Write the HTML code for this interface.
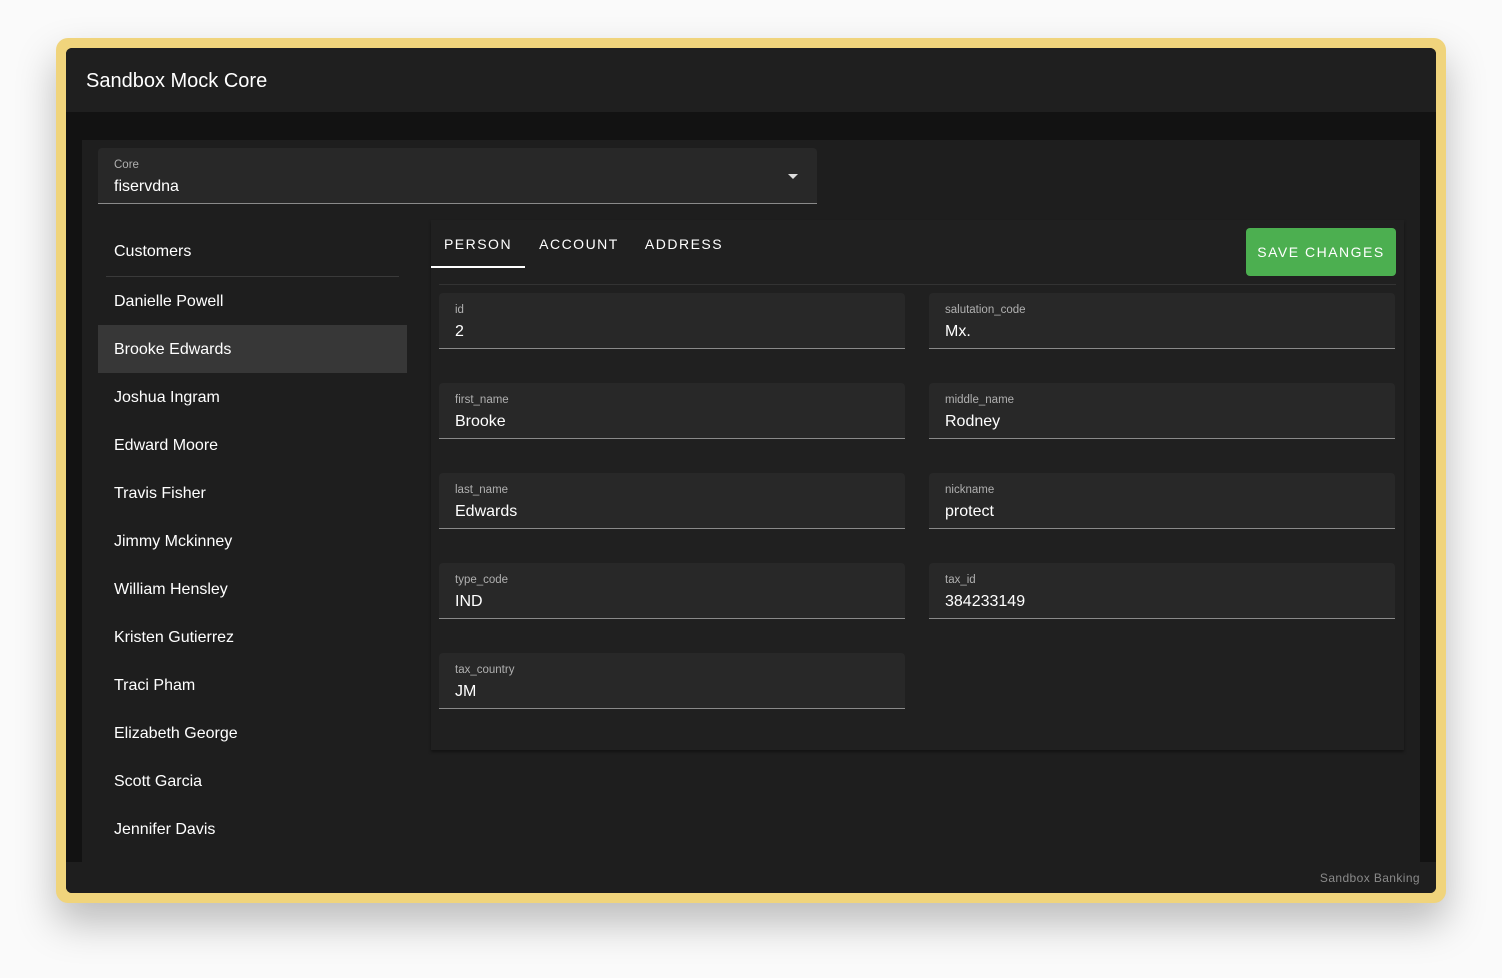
<!DOCTYPE html>
<html><head><style>
*{box-sizing:border-box;margin:0;padding:0}
body{width:1502px;height:978px;background:#fafafa;font-family:"Liberation Sans",sans-serif;position:relative;overflow:hidden}
.frame{position:absolute;left:56px;top:38px;width:1390px;height:865px;background:#f0d47c;border-radius:12px;box-shadow:0 20px 40px rgba(0,0,0,.25)}
.win{position:absolute;left:66px;top:48px;width:1370px;height:845px;background:#121212;border-radius:6px;overflow:hidden}
.hdr{position:absolute;left:0;top:0;width:100%;height:64px;background:#1f1f1f;color:#fff;font-size:20px;padding:22px 20px}
.main{position:absolute;left:16px;top:92px;width:1338px;height:722px;background:#1e1e1e}
.foot{position:absolute;left:0;top:814px;width:100%;height:31px;background:#1e1e1e;color:#8a8a8a;font-size:12px;text-align:right;padding:9px 16px;letter-spacing:.4px}
.sel{position:absolute;left:16px;top:8px;width:719px;height:56px;background:#282828;border-bottom:1px solid #8a8a8a;border-radius:4px 4px 0 0}
.lbl{position:absolute;left:16px;top:11px;font-size:11.5px;color:#b0b0b0}
.val{position:absolute;left:16px;top:30px;font-size:16px;color:#fff}
.arrow{position:absolute;right:19px;top:26px;width:0;height:0;border-left:5px solid transparent;border-right:5px solid transparent;border-top:5px solid #ddd}
.list{position:absolute;left:16px;top:78px;width:309px;height:644px;background:#1e1e1e}
.item{height:48px;line-height:50px;padding-left:16px;color:#fff;font-size:16px}
.item.act{background:#373737}
.sep{height:1px;background:#3a3a3a;margin:0 8px 0 8px}
.card{position:absolute;left:349px;top:80px;width:973px;height:530px;background:#202020;box-shadow:0 2px 3px rgba(0,0,0,.4)}
.tab{position:absolute;top:0;height:48px;line-height:48px;color:#fff;font-size:14px;letter-spacing:1.5px;text-align:center}
.btn{position:absolute;left:815px;top:8px;width:150px;height:48px;background:#4caf50;color:#fff;font-size:14px;letter-spacing:1.5px;text-align:center;line-height:48px;border-radius:4px}
.f{position:absolute;width:466px;height:56px;background:#282828;border-bottom:1px solid #8a8a8a;border-radius:4px 4px 0 0}
</style></head><body>
<div class="frame"></div>
<div class="win">
<div class="hdr">Sandbox Mock Core</div>
<div class="main">
<div class="sel"><div class="lbl">Core</div><div class="val">fiservdna</div><div class="arrow"></div></div>
<div class="list">
<div class="item" style="height:58px;line-height:68px">Customers</div>
<div class="sep"></div>
<div class="item">Danielle Powell</div>
<div class="item act">Brooke Edwards</div>
<div class="item">Joshua Ingram</div>
<div class="item">Edward Moore</div>
<div class="item">Travis Fisher</div>
<div class="item">Jimmy Mckinney</div>
<div class="item">William Hensley</div>
<div class="item">Kristen Gutierrez</div>
<div class="item">Traci Pham</div>
<div class="item">Elizabeth George</div>
<div class="item">Scott Garcia</div>
<div class="item">Jennifer Davis</div>
</div>
<div class="card">
<div class="tab" style="left:0;width:94px">PERSON</div>
<div style="position:absolute;left:0;top:46px;width:94px;height:2px;background:#fff"></div>
<div class="tab" style="left:96px;width:104px">ACCOUNT</div>
<div class="tab" style="left:203px;width:100px">ADDRESS</div>
<div class="btn">SAVE CHANGES</div>
<div style="position:absolute;left:8px;top:64px;width:957px;height:1px;background:#333"></div>
<div class="f" style="left:8px;top:73px"><div class="lbl">id</div><div class="val">2</div></div>
<div class="f" style="left:498px;top:73px"><div class="lbl">salutation_code</div><div class="val">Mx.</div></div>
<div class="f" style="left:8px;top:163px"><div class="lbl">first_name</div><div class="val">Brooke</div></div>
<div class="f" style="left:498px;top:163px"><div class="lbl">middle_name</div><div class="val">Rodney</div></div>
<div class="f" style="left:8px;top:253px"><div class="lbl">last_name</div><div class="val">Edwards</div></div>
<div class="f" style="left:498px;top:253px"><div class="lbl">nickname</div><div class="val">protect</div></div>
<div class="f" style="left:8px;top:343px"><div class="lbl">type_code</div><div class="val">IND</div></div>
<div class="f" style="left:498px;top:343px"><div class="lbl">tax_id</div><div class="val">384233149</div></div>
<div class="f" style="left:8px;top:433px"><div class="lbl">tax_country</div><div class="val">JM</div></div>
</div>
</div>
<div class="foot">Sandbox Banking</div>
</div>
</body></html>
